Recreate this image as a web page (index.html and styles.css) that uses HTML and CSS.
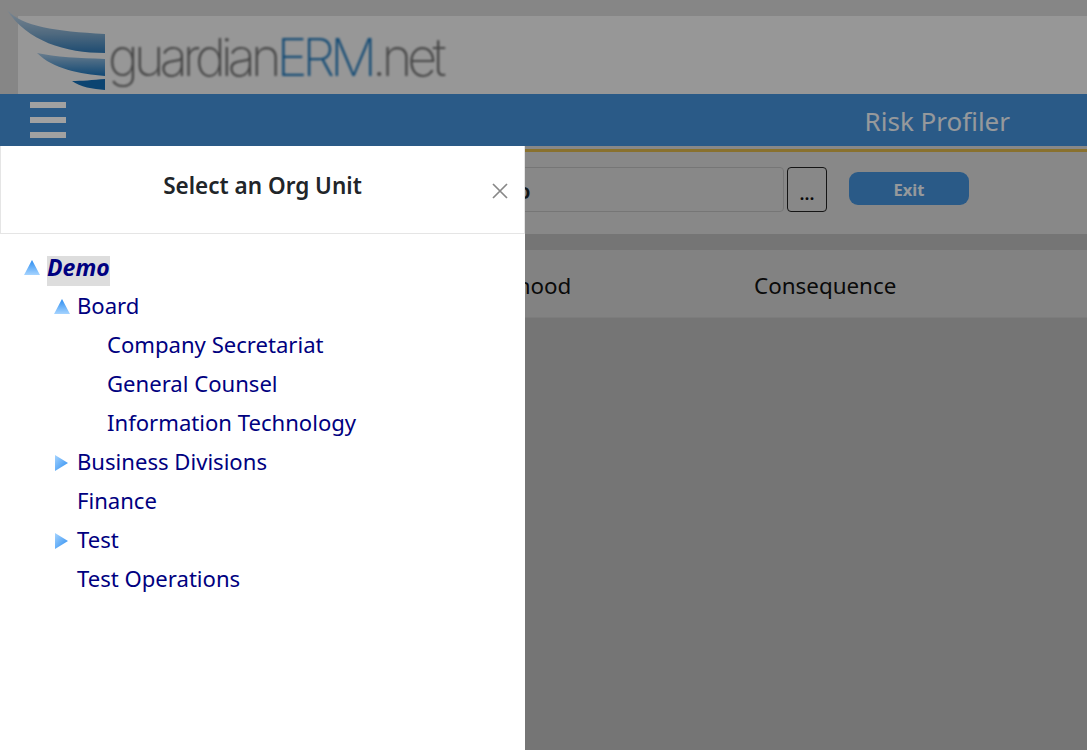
FILE: index.html
```html
<!DOCTYPE html>
<html lang="en">

<head>
    <meta charset="UTF-8">
    <meta name="viewport" content="width=device-width, initial-scale=1.0">
    <title>Risk Profiler</title>
    <link rel="stylesheet" href="styles.css">
</head>

<body>
    <div class="page">
        <div class="logo-band">
            <div class="logo-inner">
                <svg class="wing" width="100" height="84" viewBox="0 0 100 84">
                    <defs>
                        <linearGradient id="w1" x1="0" y1="0" x2="0" y2="1">
                            <stop offset="0" stop-color="#c4d6e6" />
                            <stop offset="0.55" stop-color="#7fa8ca" />
                            <stop offset="1" stop-color="#2f78b4" />
                        </linearGradient>
                        <linearGradient id="w2" x1="0" y1="0" x2="0" y2="1">
                            <stop offset="0" stop-color="#a8c6e0" />
                            <stop offset="1" stop-color="#1a72b8" />
                        </linearGradient>
                    </defs>
                    <path d="M2 3 C18 20 50 24 100 27 L100 46 C60 46 22 34 2 3 Z" fill="url(#w1)" />
                    <path d="M32 46 C50 50 75 51 100 52 L100 69 C75 67 48 62 32 46 Z" fill="url(#w2)" />
                    <path d="M67 74 C76 74 88 73 100 72 L100 83 C88 82 75 80 67 74 Z" fill="#146cb4" />
                </svg>
                <span class="logo-text">guardian<span class="logo-erm">ERM</span>.net</span>
            </div>
        </div>
        <div class="nav">
            <div class="burger"><i></i><i></i><i></i></div>
            <div class="nav-title">Risk Profiler</div>
        </div>
        <div class="gold"></div>
        <div class="toolbar">
            <input class="org-input" type="text" value="Demo">
            <button class="dots">...</button>
            <button class="exit">Exit</button>
        </div>
        <div class="table-head">
            <span class="col-like">Likelihood</span>
            <span>Consequence</span>
        </div>
    </div>

    <div class="backdrop"></div>

    <div class="panel">
        <div class="panel-head">
            <h5>Select an Org Unit</h5>
            <svg class="close" width="16" height="16" viewBox="0 0 16 16">
                <path d="M1 1 L15 15 M15 1 L1 15" stroke="#888" stroke-width="1.7" fill="none" />
            </svg>
        </div>
        <ul class="tree">
            <li>
                <div class="node">
                    <svg class="arrow" width="16" height="16" viewBox="0 0 16 16"><use href="#up" /></svg>
                    <span class="sel">Demo</span>
                </div>
                <ul>
                    <li>
                        <div class="node">
                            <svg class="arrow" width="16" height="16" viewBox="0 0 16 16"><use href="#up" /></svg>
                            <span>Board</span>
                        </div>
                        <ul>
                            <li><div class="node"><span class="blank"></span><span>Company Secretariat</span></div></li>
                            <li><div class="node"><span class="blank"></span><span>General Counsel</span></div></li>
                            <li><div class="node"><span class="blank"></span><span>Information Technology</span></div></li>
                        </ul>
                    </li>
                    <li>
                        <div class="node">
                            <svg class="arrow" width="16" height="16" viewBox="0 0 16 16"><use href="#right" /></svg>
                            <span>Business Divisions</span>
                        </div>
                    </li>
                    <li><div class="node"><span class="blank"></span><span>Finance</span></div></li>
                    <li>
                        <div class="node">
                            <svg class="arrow" width="16" height="16" viewBox="0 0 16 16"><use href="#right" /></svg>
                            <span>Test</span>
                        </div>
                    </li>
                    <li><div class="node"><span class="blank"></span><span>Test Operations</span></div></li>
                </ul>
            </li>
        </ul>
    </div>

    <svg width="0" height="0" class="defs">
        <defs>
            <linearGradient id="gu" x1="0" y1="0" x2="0" y2="1">
                <stop offset="0" stop-color="#2a8cf0" />
                <stop offset="1" stop-color="#a6d4ff" />
            </linearGradient>
            <linearGradient id="gr" x1="0" y1="0" x2="1" y2="1">
                <stop offset="0" stop-color="#a6d4ff" />
                <stop offset="1" stop-color="#2a8cf0" />
            </linearGradient>
            <path id="up" d="M8 0 L16 15 L0 15 Z" fill="url(#gu)" />
            <path id="right" d="M1 0 L14 8 L1 16 Z" fill="url(#gr)" />
        </defs>
    </svg>
</body>

</html>
```

FILE: styles.css
```css
* {
    box-sizing: border-box;
}

html, body {
    height: 100%;
}

body {
    margin: 0;
    overflow: hidden;
    font-family: "Noto Sans", "Open Sans", sans-serif;
    background-color: #b9b9b9;
    color: #212529;
}

.logo-band {
    height: 94px;
    padding-top: 16px;
    background-color: #d4d4d4;
}

.logo-inner {
    height: 78px;
    margin-left: 18px;
    background-color: #f0f0f0;
    display: flex;
    align-items: flex-start;
}

.wing {
    flex: none;
    margin: -9px 0 0 -13px;
    filter: blur(0.7px);
}

.logo-text {
    margin: 9px 0 0 3px;
    font-family: "Inter", sans-serif;
    font-weight: 200;
    font-size: 52px;
    line-height: 66px;
    letter-spacing: -4.8px;
    color: #6e6e6e;
    filter: blur(0.8px);
}

.logo-erm {
    color: #1f76b8;
}

.nav {
    height: 52px;
    background-color: #438fd6;
    display: flex;
    align-items: center;
    justify-content: space-between;
    padding: 0 77px 0 30px;
}

.burger {
    width: 36px;
}

.burger i {
    display: block;
    height: 6px;
    margin-bottom: 9px;
    background-color: #fff;
}

.burger i:last-child {
    margin-bottom: 0;
}

.nav-title {
    font-size: 26px;
    color: #eef2f6;
    padding-top: 2px;
}

.gold {
    height: 6px;
    border-bottom: 3px solid #d9b44a;
    background-color: #d8d8d8;
}

.toolbar {
    height: 82px;
    background-color: #d8d8d8;
    display: flex;
    align-items: flex-start;
    padding: 15px 0 0 300px;
}

.org-input {
    width: 484px;
    height: 45px;
    border: 1px solid #bbb;
    border-radius: 4px;
    background-color: #d8d8d8;
    padding: 0 200px 0 166px;
    font: 600 22px "Noto Sans", sans-serif;
    color: #212529;
}

.dots {
    width: 40px;
    height: 45px;
    margin-left: 3px;
    border: 1px solid #222;
    border-radius: 4px;
    background-color: #d8d8d8;
    font: 600 18px "Noto Sans", sans-serif;
    color: #111;
    padding: 6px 0 0;
}

.exit {
    width: 120px;
    height: 33px;
    margin: 5px 0 0 22px;
    border: none;
    border-radius: 9px;
    background-color: #438fd6;
    color: #eef2f6;
    font: 700 16.5px "Noto Sans", sans-serif;
    padding: 1px 0 0;
}

.table-head {
    height: 68px;
    margin-top: 16px;
    padding-top: 4px;
    background-color: #cfcfcf;
    border-bottom: 1px solid #c4c4c4;
    display: flex;
    align-items: center;
    font-size: 22.4px;
    color: #111;
}

.col-like {
    width: 754px;
    padding-left: 463px;
}

.backdrop {
    position: fixed;
    top: 0;
    left: 0;
    right: 0;
    bottom: 0;
    background-color: rgba(0, 0, 0, 0.37);
}

.panel {
    position: absolute;
    top: 146px;
    left: 0;
    bottom: 0;
    width: 525px;
    background-color: #fff;
}

.panel-head {
    height: 88px;
    border: 1px solid #e5e5e5;
    border-top: none;
    position: relative;
    text-align: center;
    padding-top: 25px;
}

.panel-head h5 {
    margin: 0;
    font-size: 22.5px;
    line-height: 30px;
    font-weight: 600;
    color: #212529;
}

.close {
    position: absolute;
    top: 37px;
    right: 16px;
}

.tree, .tree ul {
    list-style: none;
    margin: 0;
    padding: 0;
}

.tree {
    padding: 12px 0 0 24px;
}

.tree ul {
    padding-left: 30px;
}

.node {
    height: 39px;
    display: flex;
    align-items: center;
    font-size: 22.1px;
    color: #000080;
}

.arrow {
    flex: none;
    margin: 5px 7px 0 0;
    filter: blur(0.4px);
}

.blank {
    flex: none;
    width: 23px;
}

.sel {
    font-size: 23px;
    font-weight: 700;
    font-style: italic;
    background-color: #ddd;
    line-height: 22px;
    padding-bottom: 8px;
    margin-top: 10px;
}

.defs {
    position: absolute;
}
```
